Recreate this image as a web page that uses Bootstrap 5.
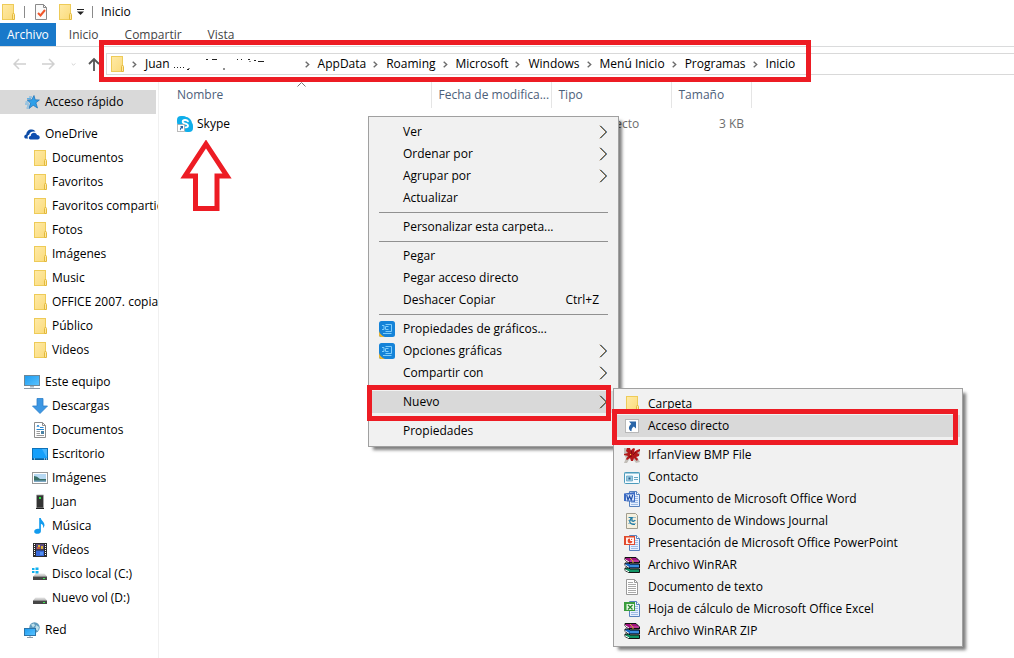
<!DOCTYPE html>
<html lang="es">
<head>
<meta charset="utf-8">
<meta name="viewport" content="width=device-width, initial-scale=1">
<title>Inicio</title>
<link href="https://cdn.jsdelivr.net/npm/bootstrap@5.3.0/dist/css/bootstrap.min.css" rel="stylesheet">
<style>
  body { font-family: "Open Sans", "Noto Sans", sans-serif; font-size: 12px; line-height: 16px; color: #000; background: #fff; overflow-x: hidden; }
  svg { display: block; flex: none; }
  .ico { width: 16px; height: 16px; }
  .note-red { position: absolute; border: 5px solid #ed1c24; pointer-events: none; z-index: 5; }

  .title-row { height: 23px; }
  .rule-v { width: 1px; height: 12px; background: #8a8a8a; }
  .plain-btn { border: 0; background: none; padding: 0; color: inherit; }

  .ribbon { height: 24px; border-bottom: 1px solid #dadbdc; }
  .ribbon .nav-link { padding: 4px 13px 3px; color: #444; line-height: 16px; border-radius: 0; }
  .ribbon .nav-link.active { background: #1979ca; color: #fff; padding: 4px 7px 3px; }

  .nav-row { padding: 6px 0; }
  .history { width: 106px; padding-left: 13px; }
  .address { height: 22px; border: 1px solid #d9d9d9; border-right: 0; }
  .address .note-red { inset: -14px -16px -8px -8px; }
  .crumbs { padding-left: 2px; }
  .crumbs a { color: #000; text-decoration: none; }
  .crumb-sep { width: 20px; padding-left: 7px; }

  .side { width: 159px; padding: 9px 0 16px 0; border-right: 1px solid #f0f0f0; flex: none; }
  .side ul { margin-bottom: 8px; }
  .side a { display: flex; align-items: center; height: 24px; color: #000; text-decoration: none; white-space: nowrap; overflow: hidden; gap: 5px; padding-left: 24px; }
  .side ul ul { margin: 0; }
  .side ul ul a { padding-left: 32px; gap: 4px; }
  .side a.current { background: #d9d9d9; margin-right: 2px; }

  .files { width: 582px; margin-left: 10px; table-layout: fixed; }
  .files th { height: 27px; padding: 1px 7px 0; font-weight: 400; color: #4c607a; border-right: 1px solid #e5e5e5; position: relative; white-space: nowrap; }
  .files td { height: 22px; padding: 0 7px; color: #6d6d6d; }
  .files tbody::before { content: ""; display: block; height: 5px; }
  .sort-mark { position: absolute; top: 1px; left: 128px; }
  .arrow-note { position: absolute; top: 24px; left: 3px; }

  .ctx { --bs-dropdown-bg: #f1f1f1; display: block; border: 1px solid #a0a0a0; border-radius: 0; padding: 4px 2px; font-size: 12px; color: #000; box-shadow: 4px 4px 3px -1px rgba(0,0,0,.5); }
  .ctx-main { left: 209px; top: 35px; width: 251px; }
  .ctx-sub { left: 242px; top: -3px; width: 350px; }
  .ctx .dropdown-item { display: flex; align-items: center; height: 22px; padding: 0 8px; color: #000; gap: 8px; }
  .ctx .dropdown-item.chosen { background: #d9d9d9; }
  .ctx hr { margin: 3px 8px; border: 0; height: 1px; background: #919191; opacity: 1; }
  .ctx-sub hr { margin: 3px 2px 3px 8px; }
  .ctx-main .note-red { inset: -6px 5px -8px -4px; }
  .ctx-sub .note-red { inset: -6px 2px -8px -4px; }
  .shortcut { padding-right: 9px; }
</style>
</head>
<body class="min-vh-100 d-flex flex-column">

<svg width="0" height="0" class="position-absolute" aria-hidden="true">
  <defs>
    <linearGradient id="gFold" x1="0" y1="0" x2="1" y2="1"><stop offset="0" stop-color="#ffeaa6"/><stop offset="1" stop-color="#fadb7c"/></linearGradient>
    <linearGradient id="gBlue" x1="0" y1="0" x2="1" y2="1"><stop offset="0" stop-color="#1b9bf0"/><stop offset="1" stop-color="#5cc4ff"/></linearGradient>
    <linearGradient id="gDisk" x1="0" y1="0" x2="0" y2="1"><stop offset="0" stop-color="#e8e8e8"/><stop offset="1" stop-color="#b5b5b5"/></linearGradient>
  </defs>
  <symbol id="i-folder" viewBox="0 0 16 16"><rect x="2.500" y=".5" width="11" height="15" fill="url(#gFold)" stroke="#eecb58"/><path d="M12.500 15.500v-5l1-1.500 1 1.500v5z" fill="#ffe89f" stroke="#e3b93c"/></symbol>
  <symbol id="i-star" viewBox="0 0 16 16"><path d="M10 1.500l1.200 4.300 4.200.2-3.500 2.800 1.600 5.200-4.300-2.700L5 14.500l1.500-5.400L3.200 6l4.600-.3z" fill="#2f9fe8" stroke="#1b6fb5" stroke-width=".7"/><path d="M5 3h3M3 4.500h4M1.500 8h3M1 10h4M3 12h2M2.500 14h2" stroke="#5caee6" stroke-width="1"/></symbol>
  <symbol id="i-cloud" viewBox="0 0 16 16"><path d="M1.500 12.500C-.6 12 .1 8.600 2.300 8.600 2.300 5 5.500 2.700 9 3.800c1.200.4 2 1.200 2.500 2-4-1-6 1-6.300 3-2 .4-2 2.700-1 3.700z" fill="#0b4ba6"/><path d="M6.500 13.500c-2.500-.3-2-3.700.2-3.600.1-3.700 5.300-4.600 6.300-.8 3.300 0 3.700 3.900.8 4.400z" fill="#0f4fb0"/></symbol>
  <symbol id="i-pc" viewBox="0 0 16 16"><rect x=".5" y="1.500" width="15" height="10" fill="url(#gBlue)" stroke="#6e8797"/><path d="M6 12h4v1.500H6z" fill="#a9b7c0"/><path d="M0 14.500h16" stroke="#8d9aa6"/></symbol>
  <symbol id="i-down" viewBox="0 0 16 16"><path d="M5 .5h6V8h4.500L8 15.500.5 8H5z" fill="#3d97e3" stroke="#2c7fc9" stroke-width=".8"/></symbol>
  <symbol id="i-doc" viewBox="0 0 16 16"><path d="M2.500.5h8l3 3v12h-11z" fill="#fff" stroke="#8c8c8c"/><path d="M10.500.5v3h3" fill="none" stroke="#8c8c8c"/><path d="M5 5l1-2 1 2M8 5.500h3.500M4.500 7.500H12" stroke="#2586d2" fill="none"/><path d="M4.500 9.500H8M4.500 11.500H8M4.500 13.500H12" stroke="#999"/><path d="M9 9h3v3H9z" fill="#4b83a5"/></symbol>
  <symbol id="i-desk" viewBox="0 0 16 16"><rect x=".5" y="2.500" width="15" height="11" fill="#16a0fb" stroke="#0e72b8"/><path d="M10 3h5v9z" fill="#46b6ff"/><path d="M0 13h16" stroke="#0b4c7c"/><path d="M2 13h1M12 13h1M14 13h1" stroke="#fff"/></symbol>
  <symbol id="i-pic" viewBox="0 0 16 16"><rect x=".5" y="2.500" width="15" height="11" fill="#fff" stroke="#999"/><path d="M2 4h12v8H2z" fill="#b7d9f3"/><path d="M2 6q3 0 6 3h6v3H2z" fill="#396f66"/><path d="M2 10.500h12V12H2z" fill="#7fa9c4"/></symbol>
  <symbol id="i-tower" viewBox="0 0 16 16"><path d="M4.500 1h7v13h-7z" fill="#333" stroke="#aaa" stroke-width=".8"/><path d="M4 14.500h8" stroke="#222"/><path d="M7 3h2v2H7z" fill="#27e33e"/></symbol>
  <symbol id="i-music" viewBox="0 0 16 16"><path d="M7.200 0h1.600c.3 3 4.200 3.800 3.600 7.800-.4 1.200-1 2-1.500 2.300.7-2.600-.3-3.700-2-4.400v7.500c0 3.200-6.700 3.600-6.700.5C2.200 11.300 5 10.500 7.200 11z" fill="#129bee"/></symbol>
  <symbol id="i-film" viewBox="0 0 16 16"><path d="M1 1h14v14H1z" fill="#2c2c2c"/><path d="M4 2h8v5.500H4z" fill="#5b4a7c"/><path d="M4 8.500h8V14H4z" fill="#3768d8"/><path d="M6 3h2v2H6zM9 4h2v3H9z" fill="#d9b43a"/><path d="M5 5h3v2H5z" fill="#c35a40"/><path d="M8 10h3v3H8z" fill="#5392f0"/><path d="M2.500 2v12M13.500 2v12" stroke="#fff" stroke-dasharray="1 1"/></symbol>
  <symbol id="i-disk" viewBox="0 0 16 16"><path d="M3.500 7.500h9l2.500 3H1z" fill="url(#gDisk)"/><path d="M1 10.500h14V14H1z" fill="#464646"/><path d="M11 12h2v1h-2z" fill="#3bea4f"/></symbol>
  <symbol id="i-diskc" viewBox="0 0 16 16"><path d="M4 7.500h8.500l2.500 3H1z" fill="url(#gDisk)"/><path d="M1 10.500h14V14H1z" fill="#464646"/><path d="M11 12h2v1h-2z" fill="#3bea4f"/><path d="M0 2h2.500v2H0zM3.500 1.500h3V4h-3zM0 5h2.500v2H0zM3.500 5h3v2.500h-3z" fill="#12b0ee"/></symbol>
  <symbol id="i-net" viewBox="0 0 16 16"><circle cx="10.500" cy="5.500" r="5.200" fill="#5f9bbd"/><path d="M7 2.500l3-1 1 2-2 2zM12 3l3 2-1 4-3-2z" fill="#bfe0ea"/><rect x=".5" y="6.500" width="11" height="7" fill="url(#gBlue)" stroke="#2d74a8"/><path d="M3 15.500h6M6 14v1" stroke="#8d9aa6"/></symbol>
  <symbol id="i-chev" viewBox="0 0 9 14"><path d="M.8.8L7 7 .8 13.200" fill="none" stroke="#a8691d" stroke-width="1"/><path d="M1.500.8L7.700 7l-6.200 6.200" fill="none" stroke="#24527c" stroke-width="1"/></symbol>
  <symbol id="i-gt" viewBox="0 0 5 7"><path d="M.7.700L3.700 3.500.7 6.300" fill="none" stroke="#6b6b6b" stroke-width="1.400"/></symbol>
  <symbol id="i-intel" viewBox="0 0 16 16"><rect width="16" height="16" rx="2.500" fill="#1583d8"/><path d="M0 10q1 4 6 6H2q-2 0-2-2z" fill="#f2b72c"/><path d="M6.500 3.500h6v7h-6M9.500 5.500h-3v3h3M3 4.500h2v4H3M4 12.500h8.500" fill="none" stroke="#7fcdfb"/></symbol>
  <symbol id="i-link" viewBox="0 0 16 16"><rect x="1.500" y="1.500" width="13" height="13" fill="#fff" stroke="#b8b8b8"/><path d="M5 3.500h7v7L9.800 8.400C8 9.700 7.500 11 7.500 13.300 3.700 11.500 4.600 8 7.300 5.900z" fill="#2b66a8"/></symbol>
  <symbol id="i-irfan" viewBox="0 0 16 16"><path d="M0 1h3l3 4v6l-3 5H0l2-5-2-3zM11 6l5-2v4l-3 2 3 5-4 1-3-4z" fill="#c2beb8"/><path d="M3 1h3l1 3 1-2 2-1 1 1-1 3 3-2 3-1v2l-3 2 2 1v2l-3 1 2 2-1 2-3-3-1 3H7l-1-3-3 2-1-1 2-3-4-1V7l4-1-2-2z" fill="#b3191a"/><path d="M7 3l1 4M12 5l-3 3M5 10l3-1" stroke="#6d0c0d" stroke-width=".8"/><path d="M6 7h1v1H6z" fill="#ffd83b"/></symbol>
  <symbol id="i-card" viewBox="0 0 16 16"><rect x=".5" y="3.500" width="15" height="11" rx="1" fill="#f4fbff" stroke="#4c9bbb"/><path d="M.5 4h15" stroke="#4c9bbb"/><path d="M2.500 7h6v5h-6z" fill="#9bcbe2" stroke="#5a9dbf" stroke-width=".7"/><path d="M4.500 8.500h2v2h-2z" fill="#285f8b"/><path d="M10 8.500h4M10 10.500h4" stroke="#6aa6c3"/></symbol>
  <symbol id="i-office" viewBox="0 0 16 16"><path d="M5.500.5h7l3 3v12h-10z" fill="#e6f0ff" stroke="#5681bd"/><path d="M12.500.5v3h3" fill="#fff" stroke="#5681bd"/><path d="M11 5.500h3M11 7.500h3M11 9.500h3M7 13.500h7M7 11.500h7" stroke="#9dbae4"/></symbol>
  <symbol id="i-word" viewBox="0 0 16 16"><use href="#i-office" width="16" height="16"/><path d="M0 2.500L11 1v10L0 10z" fill="#3c6cc4"/><path d="M2 3.500h8v6H2z" fill="#d9e7fb"/><path d="M2.700 4l1.300 5 1.600-4L7.200 9l1.500-5" fill="none" stroke="#2452ab" stroke-width="1.200"/></symbol>
  <symbol id="i-ppt" viewBox="0 0 16 16"><use href="#i-office" width="16" height="16"/><path d="M0 1h11v9H0z" fill="#e04a2d"/><path d="M2 2.500h8V9H2z" fill="#fff0eb"/><circle cx="6" cy="6" r="2.400" fill="#e9482b"/><path d="M6.500 3v2.500H9" stroke="#fff" fill="none"/></symbol>
  <symbol id="i-xls" viewBox="0 0 16 16"><use href="#i-office" width="16" height="16"/><path d="M0 1h11v9H0z" fill="#3a9d3d"/><path d="M2.500 3h7.500v6H2.500z" fill="#e8f7e4"/><path d="M4 4l4.500 4.500M8.500 4L4 8.500" stroke="#27882d" stroke-width="1.300"/></symbol>
  <symbol id="i-journal" viewBox="0 0 16 16"><path d="M2.500.5h9l2 2v13h-11z" fill="#f5f0df" stroke="#a19d8e"/><path d="M4 4.500h8M4 7.500h8M4 10.500h8" stroke="#9fc0cc"/><path d="M5 4.500h3q-3 3-2 5t5 2M8 4v4q2 1 3-1" fill="none" stroke="#237ca4" stroke-width="1.200"/></symbol>
  <symbol id="i-text" viewBox="0 0 16 16"><path d="M2.500.5h8l3 3v12h-11z" fill="#fff" stroke="#999"/><path d="M10.500.5v3h3" fill="none" stroke="#999"/><path d="M4 3.500h5M4 5.500h8M4 7.500h8M4 9.500h8M4 11.500h8M4 13.500h8" stroke="#aaa"/></symbol>
  <symbol id="i-rar" viewBox="0 0 16 16"><path d="M1 .5h11l3.500 3.500v2H5L1 3z" fill="#a3127e" stroke="#111"/><path d="M5 5.500h11" stroke="#111"/><path d="M1 6h4l1 1h9.500v4H5L1 8.500z" fill="#1769c7" stroke="#111"/><path d="M1 11h4l1 1h9.500v3.500H5L1 13.500z" fill="#119364" stroke="#111"/><path d="M1 2.500l4 2.500M1 7.800l4 2.500M1 12.800l4 2" fill="none" stroke="#fff"/><path d="M6 4h9" stroke="#e06fc0" stroke-width=".8"/><path d="M6 9h9" stroke="#6fc0ff" stroke-width=".8"/><path d="M6 1l3 3v2" fill="none" stroke="#d0ad2f"/></symbol>
  <symbol id="i-skype" viewBox="0 0 16 16"><rect x="0" y="0" width="10" height="10" rx="4" fill="#10aeea"/><rect x="6" y="6" width="10" height="10" rx="4" fill="#10aeea"/><circle cx="8" cy="8" r="7.200" fill="#10aeea"/><path d="M11 5.200C10 3.500 5.700 3.500 5.700 5.700c0 2.500 5.300 1.500 5.300 4 0 2.100-4 2.300-5.300.5" fill="none" stroke="#fff" stroke-width="1.800" stroke-linecap="round"/><rect x=".5" y="8.500" width="7" height="7" fill="#fff" stroke="#aaa" stroke-width=".8"/><path d="M3 10h3v3L5 12q-1.500 1-1.500 2.500-1.500-1.500.500-3.500z" fill="#2b66a8"/></symbol>
  <symbol id="i-props" viewBox="0 0 16 16"><path d="M2.500.5h8l3 3v12h-11z" fill="#fafafa" stroke="#8a8a8a"/><path d="M10.500.5v3h3" fill="none" stroke="#8a8a8a"/><path d="M5 9l2.500 2.500L12 6" fill="none" stroke="#f0562a" stroke-width="2"/></symbol>
</svg>

<header>
  <div class="title-row d-flex align-items-center">
    <svg class="ico"><use href="#i-folder"/></svg>
    <span class="rule-v ms-2 me-2"></span>
    <button class="plain-btn" aria-label="Propiedades"><svg class="ico"><use href="#i-props"/></svg></button>
    <button class="plain-btn ms-2" aria-label="Nueva carpeta"><svg class="ico"><use href="#i-folder"/></svg></button>
    <button class="plain-btn ms-1" aria-label="Personalizar barra"><svg width="7" height="6" viewBox="0 0 7 6"><path d="M0 .5h7" stroke="#222"/><path d="M0 2.500h7L3.500 6z" fill="#222"/></svg></button>
    <span class="rule-v mx-2"></span>
    <span>Inicio</span>
  </div>
  <nav class="ribbon nav flex-nowrap">
    <a class="nav-link active" href="#">Archivo</a>
    <a class="nav-link" href="#">Inicio</a>
    <a class="nav-link" href="#">Compartir</a>
    <a class="nav-link" href="#">Vista</a>
  </nav>
  <div class="nav-row d-flex align-items-center">
    <div class="history d-flex align-items-center flex-shrink-0">
      <button class="plain-btn" aria-label="Atrás"><svg width="13" height="12" viewBox="0 0 13 12"><path d="M13 6H1M6 1L1 6l5 5" fill="none" stroke="#d0d0d0" stroke-width="1.500"/></svg></button>
      <button class="plain-btn ms-3" aria-label="Adelante"><svg width="13" height="12" viewBox="0 0 13 12"><path d="M0 6h12M7 1l5 5-5 5" fill="none" stroke="#d0d0d0" stroke-width="1.500"/></svg></button>
      <button class="plain-btn ms-3" aria-label="Recientes"><svg width="5" height="5" viewBox="0 0 7 5"><path d="M1 1l2.500 2.500L6 1" fill="none" stroke="#ccc" stroke-width="1.300"/></svg></button>
      <button class="plain-btn ms-2 ps-1" aria-label="Arriba"><svg width="12" height="14" viewBox="0 0 12 14"><path d="M6 14V2M1 7l5-5 5 5" fill="none" stroke="#555" stroke-width="1.800"/></svg></button>
    </div>
    <div class="address flex-grow-1 d-flex align-items-center">
      <nav class="crumbs position-relative d-flex align-items-center text-nowrap h-100" aria-label="Ruta">
        <svg class="ico"><use href="#i-folder"/></svg>
        <span class="crumb-sep"><svg width="5" height="7"><use href="#i-gt"/></svg></span>
        <a href="#" class="d-flex align-items-center">Juan
          <svg width="128" height="16" viewBox="0 0 128 16"><path d="M4 11.500h1M7 11.500h1M10 11.500h1M13 11.500h1M17 13.500h2M19 12v1M36 3.500h2M42 3.500h5M54 12v2M67 3.500h1M71 3.500h1M78 3.500h2M84 4.500h2M88 5.500h6M80 5v1" stroke="#222" fill="none"/></svg></a>
        <span class="crumb-sep"><svg width="5" height="7"><use href="#i-gt"/></svg></span>
        <a href="#">AppData</a><span class="crumb-sep"><svg width="5" height="7"><use href="#i-gt"/></svg></span>
        <a href="#">Roaming</a><span class="crumb-sep"><svg width="5" height="7"><use href="#i-gt"/></svg></span>
        <a href="#">Microsoft</a><span class="crumb-sep"><svg width="5" height="7"><use href="#i-gt"/></svg></span>
        <a href="#">Windows</a><span class="crumb-sep"><svg width="5" height="7"><use href="#i-gt"/></svg></span>
        <a href="#">Menú Inicio</a><span class="crumb-sep"><svg width="5" height="7"><use href="#i-gt"/></svg></span>
        <a href="#">Programas</a><span class="crumb-sep"><svg width="5" height="7"><use href="#i-gt"/></svg></span>
        <a href="#">Inicio</a>
        <span class="note-red"></span>
      </nav>
    </div>
  </div>
</header>

<div class="d-flex flex-grow-1">
  <nav class="side" aria-label="Panel de navegación">
    <ul class="list-unstyled"><li><a class="current" href="#"><svg class="ico"><use href="#i-star"/></svg>Acceso rápido</a></li></ul>
    <ul class="list-unstyled">
      <li><a href="#"><svg class="ico"><use href="#i-cloud"/></svg>OneDrive</a>
        <ul class="list-unstyled">
          <li><a href="#"><svg class="ico"><use href="#i-folder"/></svg>Documentos</a></li>
          <li><a href="#"><svg class="ico"><use href="#i-folder"/></svg>Favoritos</a></li>
          <li><a href="#"><svg class="ico"><use href="#i-folder"/></svg>Favoritos compartidos</a></li>
          <li><a href="#"><svg class="ico"><use href="#i-folder"/></svg>Fotos</a></li>
          <li><a href="#"><svg class="ico"><use href="#i-folder"/></svg>Imágenes</a></li>
          <li><a href="#"><svg class="ico"><use href="#i-folder"/></svg>Music</a></li>
          <li><a href="#"><svg class="ico"><use href="#i-folder"/></svg>OFFICE 2007. copia</a></li>
          <li><a href="#"><svg class="ico"><use href="#i-folder"/></svg>Público</a></li>
          <li><a href="#"><svg class="ico"><use href="#i-folder"/></svg>Videos</a></li>
        </ul>
      </li>
    </ul>
    <ul class="list-unstyled">
      <li><a href="#"><svg class="ico"><use href="#i-pc"/></svg>Este equipo</a>
        <ul class="list-unstyled">
          <li><a href="#"><svg class="ico"><use href="#i-down"/></svg>Descargas</a></li>
          <li><a href="#"><svg class="ico"><use href="#i-doc"/></svg>Documentos</a></li>
          <li><a href="#"><svg class="ico"><use href="#i-desk"/></svg>Escritorio</a></li>
          <li><a href="#"><svg class="ico"><use href="#i-pic"/></svg>Imágenes</a></li>
          <li><a href="#"><svg class="ico"><use href="#i-tower"/></svg>Juan</a></li>
          <li><a href="#"><svg class="ico"><use href="#i-music"/></svg>Música</a></li>
          <li><a href="#"><svg class="ico"><use href="#i-film"/></svg>Vídeos</a></li>
          <li><a href="#"><svg class="ico"><use href="#i-diskc"/></svg>Disco local (C:)</a></li>
          <li><a href="#"><svg class="ico"><use href="#i-disk"/></svg>Nuevo vol (D:)</a></li>
        </ul>
      </li>
    </ul>
    <ul class="list-unstyled mb-0"><li><a href="#"><svg class="ico"><use href="#i-net"/></svg>Red</a></li></ul>
  </nav>

  <main class="flex-grow-1 position-relative">
    <table class="files">
      <colgroup><col style="width:262px"><col style="width:120px"><col style="width:120px"><col style="width:80px"></colgroup>
      <thead>
        <tr>
          <th scope="col" class="ps-2">Nombre<svg class="sort-mark" width="9" height="5" viewBox="0 0 9 5"><path d="M.5 4.500l4-4 4 4" fill="none" stroke="#777"/></svg></th>
          <th scope="col">Fecha de modifica...</th><th scope="col">Tipo</th><th scope="col">Tamaño</th>
        </tr>
      </thead>
      <tbody>
        <tr>
          <td class="ps-2 text-black"><div class="position-relative d-flex align-items-center gap-1"><svg class="ico"><use href="#i-skype"/></svg>Skype
            <svg class="arrow-note" width="52" height="72" viewBox="0 0 52 72"><path d="M26 4L47 36H37V68.500H15.500V36H5z" fill="#fff" stroke="#ed1c24" stroke-width="5"/></svg></div></td>
          <td></td><td>Acceso directo</td><td class="text-end">3 KB</td>
        </tr>
      </tbody>
    </table>

    <ul class="dropdown-menu show ctx ctx-main">
      <li><button class="dropdown-item"><span class="ico"></span>Ver<svg class="ms-auto" width="9" height="14"><use href="#i-chev"/></svg></button></li>
      <li><button class="dropdown-item"><span class="ico"></span>Ordenar por<svg class="ms-auto" width="9" height="14"><use href="#i-chev"/></svg></button></li>
      <li><button class="dropdown-item"><span class="ico"></span>Agrupar por<svg class="ms-auto" width="9" height="14"><use href="#i-chev"/></svg></button></li>
      <li><button class="dropdown-item"><span class="ico"></span>Actualizar</button></li>
      <li><hr></li>
      <li><button class="dropdown-item"><span class="ico"></span>Personalizar esta carpeta...</button></li>
      <li><hr></li>
      <li><button class="dropdown-item"><span class="ico"></span>Pegar</button></li>
      <li><button class="dropdown-item"><span class="ico"></span>Pegar acceso directo</button></li>
      <li><button class="dropdown-item"><span class="ico"></span>Deshacer Copiar<span class="shortcut ms-auto">Ctrl+Z</span></button></li>
      <li><hr></li>
      <li><button class="dropdown-item"><svg class="ico"><use href="#i-intel"/></svg>Propiedades de gráficos...</button></li>
      <li><button class="dropdown-item"><svg class="ico"><use href="#i-intel"/></svg>Opciones gráficas<svg class="ms-auto" width="9" height="14"><use href="#i-chev"/></svg></button></li>
      <li><button class="dropdown-item"><span class="ico"></span>Compartir con<svg class="ms-auto" width="9" height="14"><use href="#i-chev"/></svg></button></li>
      <li><hr></li>
      <li class="position-relative">
        <button class="dropdown-item chosen" aria-expanded="true"><span class="ico"></span>Nuevo<svg class="ms-auto" width="9" height="14"><use href="#i-chev"/></svg></button>
        <span class="note-red"></span>
        <ul class="dropdown-menu show ctx ctx-sub">
          <li><button class="dropdown-item"><svg class="ico"><use href="#i-folder"/></svg>Carpeta</button></li>
          <li class="position-relative"><button class="dropdown-item chosen"><svg class="ico"><use href="#i-link"/></svg>Acceso directo</button><span class="note-red"></span></li>
          <li><hr></li>
          <li><button class="dropdown-item"><svg class="ico"><use href="#i-irfan"/></svg>IrfanView BMP File</button></li>
          <li><button class="dropdown-item"><svg class="ico"><use href="#i-card"/></svg>Contacto</button></li>
          <li><button class="dropdown-item"><svg class="ico"><use href="#i-word"/></svg>Documento de Microsoft Office Word</button></li>
          <li><button class="dropdown-item"><svg class="ico"><use href="#i-journal"/></svg>Documento de Windows Journal</button></li>
          <li><button class="dropdown-item"><svg class="ico"><use href="#i-ppt"/></svg>Presentación de Microsoft Office PowerPoint</button></li>
          <li><button class="dropdown-item"><svg class="ico"><use href="#i-rar"/></svg>Archivo WinRAR</button></li>
          <li><button class="dropdown-item"><svg class="ico"><use href="#i-text"/></svg>Documento de texto</button></li>
          <li><button class="dropdown-item"><svg class="ico"><use href="#i-xls"/></svg>Hoja de cálculo de Microsoft Office Excel</button></li>
          <li><button class="dropdown-item"><svg class="ico"><use href="#i-rar"/></svg>Archivo WinRAR ZIP</button></li>
        </ul>
      </li>
      <li><hr></li>
      <li><button class="dropdown-item"><span class="ico"></span>Propiedades</button></li>
    </ul>
  </main>
</div>
<script src="https://cdn.jsdelivr.net/npm/bootstrap@5.3.0/dist/js/bootstrap.bundle.min.js"></script>
</body>
</html>
